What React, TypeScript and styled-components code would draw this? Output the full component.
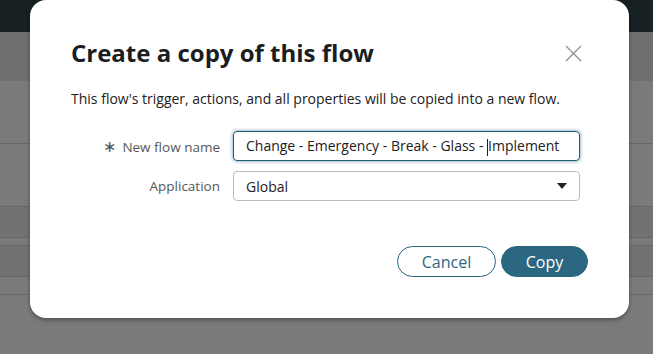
import styled, { createGlobalStyle } from "styled-components";

const GlobalStyle = createGlobalStyle`
  html, body {
    margin: 0;
    padding: 0;
    background: #797a79;
  }
  body {
    font-family: "Open Sans", "Noto Sans", sans-serif;
    overflow: hidden;
  }
`;

const Page = styled.div`
  position: relative;
  width: 653px;
  height: 354px;
  display: flex;
  flex-direction: column;
  background: #797a79;
  overflow: hidden;
`;

const TopBar = styled.div`
  height: 32px;
  background: #172023;
`;

const SubBar = styled.div`
  height: 49px;
  background: #6e6f6f;
`;

const Row = styled.div<{ $h: number; $dark?: boolean }>`
  height: ${(p) => p.$h}px;
  background: ${(p) => (p.$dark ? "#717272" : "#797a79")};
  border-bottom: 1px solid #666767;
  box-sizing: border-box;
`;

const Modal = styled.div`
  position: absolute;
  left: 30px;
  top: 0;
  width: 599px;
  height: 318px;
  box-sizing: border-box;
  background: #fff;
  border-radius: 16px;
  box-shadow: 0 2px 4px rgba(0, 0, 0, 0.35);
  padding: 36px 41px 0 41px;
  display: flex;
  flex-direction: column;
`;

const Header = styled.div`
  display: flex;
  align-items: center;
  justify-content: space-between;
`;

const Title = styled.h2`
  margin: 0;
  font-size: 24px;
  font-weight: 700;
  color: #1b1d1e;
  line-height: 34px;
`;

const CloseButton = styled.button`
  width: 18px;
  height: 18px;
  margin-right: 6px;
  padding: 0;
  border: none;
  background: none;
  display: flex;
  align-items: center;
  justify-content: center;
`;

const Description = styled.p`
  margin: 19px 0 0;
  font-size: 14px;
  line-height: 20px;
  color: #1e2021;
`;

const Form = styled.div`
  margin-top: 22px;
  display: grid;
  grid-template-columns: 149px 347px;
  column-gap: 13px;
  row-gap: 10px;
  align-items: center;
`;

const Label = styled.label`
  text-align: right;
  font-size: 13.5px;
  color: #555859;
`;

const Star = styled.span`
  font-size: 16px;
  margin-right: 6px;
`;

const Field = styled.div<{ $focused?: boolean }>`
  height: 30px;
  box-sizing: border-box;
  border: 1px solid ${(p) => (p.$focused ? "#1f5a73" : "#b9bcbe")};
  border-radius: 4px;
  box-shadow: ${(p) => (p.$focused ? "0 0 3px 1px rgba(41, 108, 138, 0.45)" : "none")};
  padding: 0 12px;
  display: flex;
  align-items: center;
  justify-content: space-between;
  font-size: 14px;
  color: #1e2021;
  white-space: nowrap;
`;

const Caret = styled.span`
  display: inline-block;
  width: 1px;
  height: 17px;
  background: #1e2021;
  vertical-align: middle;
`;

const Footer = styled.div`
  margin-top: 45px;
  display: flex;
  justify-content: flex-end;
  gap: 5px;
`;

const Button = styled.button<{ $primary?: boolean }>`
  height: 31px;
  box-sizing: border-box;
  border-radius: 16px;
  border: 1px solid #2b6781;
  background: ${(p) => (p.$primary ? "#2b6781" : "#fff")};
  color: ${(p) => (p.$primary ? "#fff" : "#2b6781")};
  font-family: inherit;
  font-size: 16px;
  padding: 0;
  width: ${(p) => (p.$primary ? 87 : 99)}px;
`;

export default function App() {
  return (
    <>
      <GlobalStyle />
      <Page>
        <TopBar />
        <SubBar />
        <Row $h={63} />
        <Row $h={63} />
        <Row $h={31} $dark />
        <Row $h={8} />
        <Row $h={31} $dark />
        <Row $h={18} />
        <Modal>
          <Header>
            <Title>Create a copy of this flow</Title>
            <CloseButton aria-label="Close">
              <svg width="17" height="17" viewBox="0 0 17 17">
                <path d="M1 1 L16 16 M16 1 L1 16" stroke="#8a8d8f" strokeWidth="1.2" fill="none" />
              </svg>
            </CloseButton>
          </Header>
          <Description>
            This flow's trigger, actions, and all properties will be copied into a new flow.
          </Description>
          <Form>
            <Label>
              <Star>∗</Star>New flow name
            </Label>
            <Field $focused>
              <span>
                Change - Emergency - Break - Glass - <Caret />Implement
              </span>
            </Field>
            <Label>Application</Label>
            <Field>
              <span>Global</span>
              <svg width="10" height="6" viewBox="0 0 10 6">
                <path d="M0 0 L10 0 L5 6 Z" fill="#1e2021" />
              </svg>
            </Field>
          </Form>
          <Footer>
            <Button>Cancel</Button>
            <Button $primary>Copy</Button>
          </Footer>
        </Modal>
      </Page>
    </>
  );
}
